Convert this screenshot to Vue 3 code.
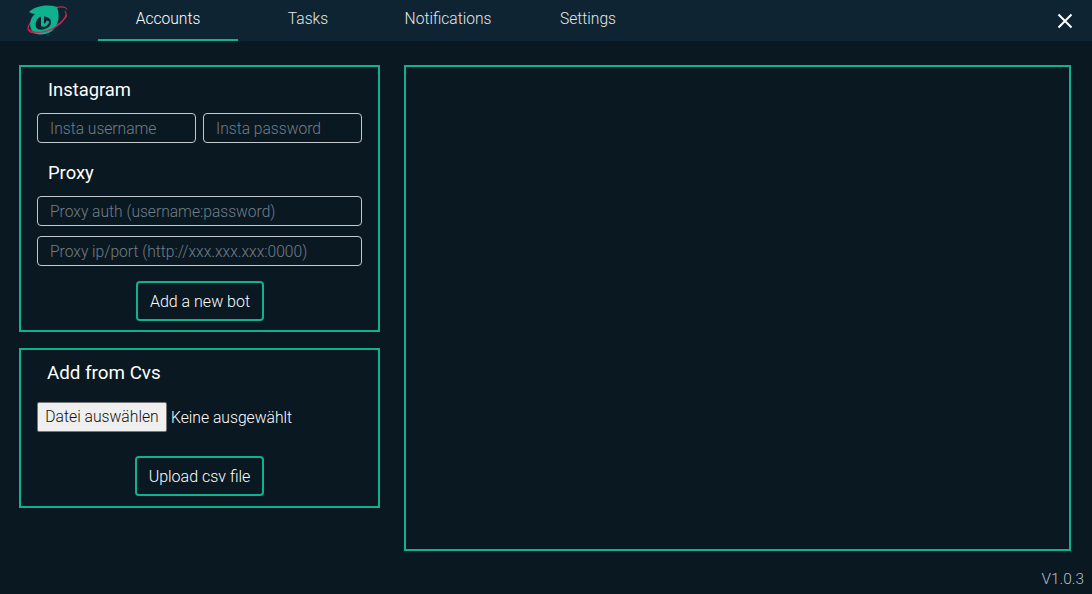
<script setup>
const tabs = [
  { name: 'Accounts', active: true },
  { name: 'Tasks', active: false },
  { name: 'Notifications', active: false },
  { name: 'Settings', active: false }
]
</script>

<template>
  <div class="app">
    <header class="topbar">
      <div class="logo">
        <svg width="40" height="34" viewBox="0 0 40 34">
          <ellipse cx="21" cy="17" rx="22" ry="9" fill="none" stroke="#c9264f" stroke-width="1.2" transform="rotate(-28 21 17)" />
          <path d="M2 9 C8 3 20 1 30 4 C33 12 32 22 25 28 C18 33 7 33 4 26 C2 20 4 14 8 11 C6 11 4 10 2 9 Z" fill="#0fb28f" />
          <path d="M13 14 C9 16 8 21 9 24 C11 28 17 27 20 25 C24 23 25 19 23 16 C21 14 16 12 13 14 Z" fill="#0e2433" />
          <path d="M15.5 12 L15.5 23 M15 22 C18 23 20 21 21 18" fill="none" stroke="#0fb28f" stroke-width="3" />
          <path d="M1 26 C8 32 22 29 30 23 C37 18 41 12 38 8" fill="none" stroke="#c9264f" stroke-width="1.2" />
          <circle cx="21" cy="32" r="0.6" fill="#3a4fc0" />
        </svg>
      </div>
      <nav class="tabs">
        <a v-for="tab in tabs" :key="tab.name" class="tab" :class="{ active: tab.active }">{{ tab.name }}</a>
      </nav>
      <button class="close" aria-label="Close">
        <svg width="16" height="16" viewBox="0 0 16 16">
          <path d="M1.5 1.5 L14.5 14.5 M14.5 1.5 L1.5 14.5" stroke="#fff" stroke-width="2" fill="none" />
        </svg>
      </button>
    </header>

    <main class="content">
      <div class="left">
        <section class="panel panel-bot">
          <h2 class="panel-title">Instagram</h2>
          <div class="row">
            <input class="field" placeholder="Insta username" />
            <input class="field" placeholder="Insta password" />
          </div>
          <h2 class="panel-title proxy-title">Proxy</h2>
          <input class="field wide" placeholder="Proxy auth (username:password)" />
          <input class="field wide second" placeholder="Proxy ip/port (http://xxx.xxx.xxx:0000)" />
          <button class="action add">Add a new bot</button>
        </section>

        <section class="panel panel-csv">
          <h2 class="panel-title csv-title">Add from Cvs</h2>
          <div class="file-row">
            <span class="file-btn">Datei auswählen</span>
            <span class="file-name">Keine ausgewählt</span>
          </div>
          <button class="action upload">Upload csv file</button>
        </section>
      </div>

      <section class="panel output"></section>
    </main>

    <span class="version">V1.0.3</span>
  </div>
</template>

<style scoped>
.app {
  position: relative;
  width: 1092px;
  height: 594px;
  overflow: hidden;
  background: #0a1822;
  font-family: Roboto, 'Open Sans', sans-serif;
  font-weight: 300;
  color: #fff;
}

.topbar {
  display: flex;
  align-items: stretch;
  height: 41px;
  background: #0e2433;
}

.logo {
  width: 98px;
  padding: 3px 0 0 27px;
  box-sizing: border-box;
}

.tabs {
  display: flex;
}

.tab {
  width: 140px;
  box-sizing: border-box;
  text-align: center;
  font-size: 15.6px;
  line-height: 39px;
  color: #e4e8ea;
  border-bottom: 2px solid transparent;
}

.tab.active {
  color: #fff;
  border-bottom-color: #0fb28f;
}

.close {
  margin-left: auto;
  margin-right: 19px;
  padding: 0;
  background: none;
  border: none;
  display: flex;
  align-items: center;
}

.content {
  display: flex;
  align-items: flex-start;
  gap: 24px;
  padding: 24px 21px 0 19px;
}

.left {
  width: 361px;
  display: flex;
  flex-direction: column;
  gap: 16px;
}

.panel {
  border: 2px solid #0fb28f;
  box-sizing: border-box;
}

.panel-bot {
  height: 267px;
  padding: 0 16px;
}

.panel-csv {
  height: 160px;
  padding: 0 16px;
}

.output {
  flex: 1;
  height: 486px;
}

.panel-title {
  margin: 0;
  padding-left: 11px;
  font-size: 18.4px;
  font-weight: 400;
  line-height: 24px;
  padding-top: 11px;
}

.proxy-title {
  padding-top: 18px;
  margin-bottom: 11px;
}

.csv-title {
  padding-left: 10px;
  font-size: 18.8px;
}

.row {
  display: flex;
  gap: 7px;
  margin-top: 11px;
}

.field {
  width: 159px;
  height: 30px;
  box-sizing: border-box;
  padding: 2px 12px 0;
  background: transparent;
  border: 1px solid #c3c9cd;
  border-radius: 4px;
  outline: none;
  color: #fff;
  font: inherit;
  font-size: 15.6px;
  display: block;
}

.field::placeholder {
  color: #727e86;
  opacity: 1;
}

.wide {
  width: 325px;
}

.second {
  margin-top: 10px;
}

.action {
  display: block;
  background: transparent;
  border: 2px solid #0fb28f;
  border-radius: 4px;
  color: #fff;
  font: inherit;
  font-size: 16px;
  height: 40px;
  padding: 0;
}

.add {
  width: 128px;
  margin: 15px 0 0 99px;
}

.upload {
  width: 129px;
  margin: 24px 0 0 98px;
}

.file-row {
  display: flex;
  align-items: center;
  margin-top: 17px;
  font-size: 15.7px;
}

.file-btn {
  width: 130px;
  height: 30px;
  box-sizing: border-box;
  background: #efefef;
  border: 1px solid #767676;
  border-radius: 2px;
  color: #111;
  font-size: 15.7px;
  line-height: 28px;
  text-align: center;
}

.file-name {
  margin-left: 4px;
  color: #fff;
}

.version {
  position: absolute;
  right: 8px;
  bottom: 6px;
  font-size: 15.4px;
  color: #b9c1c6;
}
</style>
